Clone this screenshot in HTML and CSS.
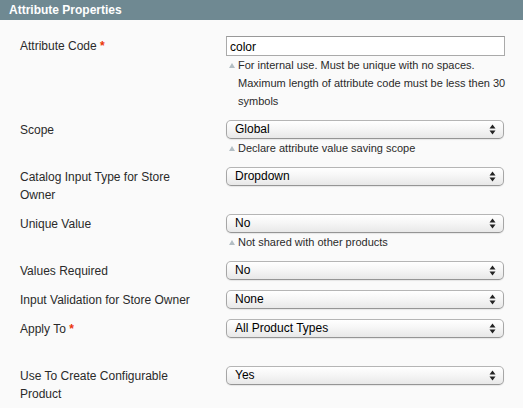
FILE: index.html
```html
<!DOCTYPE html>
<html>
<head>
<meta charset="utf-8">
<link rel="stylesheet" href="styles.css">
</head>
<body>
<div class="box">
  <div class="head"><h4>Attribute Properties</h4></div>
  <div class="fieldset">
    <div class="row">
      <div class="label">Attribute Code <span class="req">*</span></div>
      <div class="value">
        <input class="text" type="text" value="color">
        <p class="note">For internal use. Must be unique with no spaces. Maximum length of attribute code must be less then 30 symbols</p>
      </div>
    </div>
    <div class="row">
      <div class="label">Scope</div>
      <div class="value">
        <div class="sel"><select><option>Global</option></select><svg class="arr" width="7" height="11" viewBox="0 0 7 11"><path d="M3.5 0.5 L6.5 4.5 L0.5 4.5 Z M0.5 6.5 L6.5 6.5 L3.5 10.5 Z" fill="#222"/></svg></div>
        <p class="note">Declare attribute value saving scope</p>
      </div>
    </div>
    <div class="row">
      <div class="label">Catalog Input Type for Store Owner</div>
      <div class="value">
        <div class="sel"><select><option>Dropdown</option></select><svg class="arr" width="7" height="11" viewBox="0 0 7 11"><path d="M3.5 0.5 L6.5 4.5 L0.5 4.5 Z M0.5 6.5 L6.5 6.5 L3.5 10.5 Z" fill="#222"/></svg></div>
      </div>
    </div>
    <div class="row">
      <div class="label">Unique Value</div>
      <div class="value">
        <div class="sel"><select><option>No</option></select><svg class="arr" width="7" height="11" viewBox="0 0 7 11"><path d="M3.5 0.5 L6.5 4.5 L0.5 4.5 Z M0.5 6.5 L6.5 6.5 L3.5 10.5 Z" fill="#222"/></svg></div>
        <p class="note">Not shared with other products</p>
      </div>
    </div>
    <div class="row">
      <div class="label">Values Required</div>
      <div class="value">
        <div class="sel"><select><option>No</option></select><svg class="arr" width="7" height="11" viewBox="0 0 7 11"><path d="M3.5 0.5 L6.5 4.5 L0.5 4.5 Z M0.5 6.5 L6.5 6.5 L3.5 10.5 Z" fill="#222"/></svg></div>
      </div>
    </div>
    <div class="row">
      <div class="label">Input Validation for Store Owner</div>
      <div class="value">
        <div class="sel"><select><option>None</option></select><svg class="arr" width="7" height="11" viewBox="0 0 7 11"><path d="M3.5 0.5 L6.5 4.5 L0.5 4.5 Z M0.5 6.5 L6.5 6.5 L3.5 10.5 Z" fill="#222"/></svg></div>
      </div>
    </div>
    <div class="row">
      <div class="label">Apply To <span class="req">*</span></div>
      <div class="value">
        <div class="sel"><select><option>All Product Types</option></select><svg class="arr" width="7" height="11" viewBox="0 0 7 11"><path d="M3.5 0.5 L6.5 4.5 L0.5 4.5 Z M0.5 6.5 L6.5 6.5 L3.5 10.5 Z" fill="#222"/></svg></div>
        <div class="spacer"></div>
      </div>
    </div>
    <div class="row">
      <div class="label">Use To Create Configurable Product</div>
      <div class="value">
        <div class="sel"><select><option>Yes</option></select><svg class="arr" width="7" height="11" viewBox="0 0 7 11"><path d="M3.5 0.5 L6.5 4.5 L0.5 4.5 Z M0.5 6.5 L6.5 6.5 L3.5 10.5 Z" fill="#222"/></svg></div>
      </div>
    </div>
  </div>
</div>
</body>
</html>
```

FILE: styles.css
```css
html, body {
  margin: 0;
  padding: 0;
  background: #fafafa;
}
body {
  font-family: "Liberation Sans", Arial, Helvetica, sans-serif;
  font-size: 12px;
  color: #2f2f2f;
}
.box {
  width: 523px;
  height: 408px;
  overflow: hidden;
  background: #fafafa;
}
.head {
  background: #6f8992;
  height: 20px;
  padding: 0 9px;
  display: flex;
  align-items: center;
}
.head h4 {
  margin: 0;
  color: #fff;
  font-size: 12px;
  font-weight: bold;
  line-height: 20px;
}
.fieldset {
  padding: 16px 10px 0 20px;
}
.row {
  display: grid;
  grid-template-columns: 206px 279px;
  margin-bottom: 10px;
}
.label {
  padding-top: 1px;
  line-height: 18px;
  padding-right: 20px;
  color: #2a2a2a;
}
.req {
  color: #eb340a;
  font-weight: bold;
}
.value {
  display: flex;
  flex-direction: column;
}
.text {
  box-sizing: border-box;
  width: 279px;
  height: 20px;
  margin: 0;
  padding: 1px 3px 0;
  border: 1px solid #aaa;
  border-top-color: #999;
  background: #fff;
  font-family: "Liberation Sans", Arial, Helvetica, sans-serif;
  font-size: 12px;
  color: #000;
  outline: none;
}
.note {
  margin: 0 -10px 0 0;
  padding-left: 12px;
  font-size: 11px;
  line-height: 18px;
  color: #2a2a2a;
  position: relative;
}
.note::before {
  content: "";
  position: absolute;
  left: 3px;
  top: 7px;
  width: 0;
  height: 0;
  border-left: 3px solid transparent;
  border-right: 3px solid transparent;
  border-bottom: 5px solid #b3bec4;
}
.sel {
  position: relative;
  width: 278px;
  height: 19px;
}
.sel select {
  -webkit-appearance: none;
  appearance: none;
  box-sizing: border-box;
  width: 278px;
  height: 19px;
  margin: 0;
  padding: 0 0 1px 8px;
  border: 1px solid #a6a6a6;
  border-top-color: #b5b5b5;
  border-bottom-color: #959595;
  border-radius: 5px;
  background: linear-gradient(#ffffff 0%, #f6f6f6 45%, #e8e8e8 100%);
  box-shadow: 0 1px 1px rgba(0,0,0,0.08);
  font-family: "Liberation Sans", Arial, Helvetica, sans-serif;
  font-size: 12px;
  line-height: 17px;
  color: #000;
  outline: none;
}
.arr {
  position: absolute;
  right: 8px;
  top: 4px;
  pointer-events: none;
}
.spacer {
  height: 18px;
}
```
